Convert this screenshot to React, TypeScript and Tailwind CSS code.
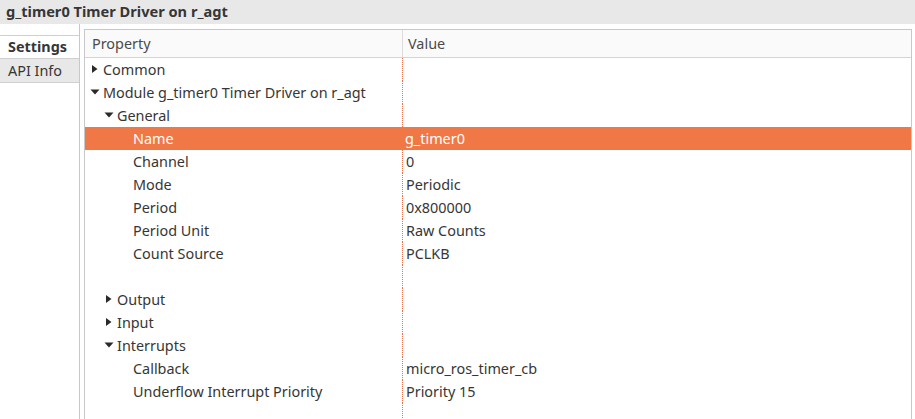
import React from 'react';

type Row = {
  label: string;
  value?: string;
  level: 0 | 1 | 2 | 3;
  arrow?: 'right' | 'down';
  selected?: boolean;
};

const rows: Row[] = [
  { label: 'Common', level: 1, arrow: 'right' },
  { label: 'Module g_timer0 Timer Driver on r_agt', level: 1, arrow: 'down' },
  { label: 'General', level: 2, arrow: 'down' },
  { label: 'Name', value: 'g_timer0', level: 3, selected: true },
  { label: 'Channel', value: '0', level: 3 },
  { label: 'Mode', value: 'Periodic', level: 3 },
  { label: 'Period', value: '0x800000', level: 3 },
  { label: 'Period Unit', value: 'Raw Counts', level: 3 },
  { label: 'Count Source', value: 'PCLKB', level: 3 },
  { label: '', level: 0 },
  { label: 'Output', level: 2, arrow: 'right' },
  { label: 'Input', level: 2, arrow: 'right' },
  { label: 'Interrupts', level: 2, arrow: 'down' },
  { label: 'Callback', value: 'micro_ros_timer_cb', level: 3 },
  { label: 'Underflow Interrupt Priority', value: 'Priority 15', level: 3 },
  { label: '', level: 0 },
];

const Arrow: React.FC<{ dir: 'right' | 'down'; light?: boolean }> = ({ dir, light }) => (
  <svg width="10" height="10" viewBox="0 0 10 10" className="shrink-0">
    {dir === 'right' ? (
      <path d="M2 1 L7.5 5 L2 9 Z" fill={light ? '#fff' : '#2a2a2a'} />
    ) : (
      <path d="M0.5 2.5 L9.5 2.5 L5 7.5 Z" fill={light ? '#fff' : '#2a2a2a'} />
    )}
  </svg>
);

const indentFor = (row: Row) => {
  if (row.level === 1) return 'pl-[5px]';
  if (row.level === 2) return 'pl-[19px]';
  return 'pl-[48px]';
};

const PropertyRow: React.FC<{ row: Row }> = ({ row }) => (
  <div className={`flex h-[23px] items-center ${row.selected ? 'bg-[#f07846] text-white' : 'text-[#363636]'}`}>
    <div className={`flex w-[317px] shrink-0 items-center gap-[3px] ${indentFor(row)}`}>
      {row.arrow && <Arrow dir={row.arrow} light={row.selected} />}
      <span className="whitespace-nowrap">{row.label}</span>
    </div>
    <div className={`flex h-full flex-1 items-center pl-[3px] ${row.selected ? '' : 'border-l border-dotted border-[#e8704a]'}`}>
      <span className="whitespace-nowrap">{row.value}</span>
    </div>
  </div>
);

export default function App() {
  return (
    <div
      className="flex h-[419px] w-[915px] flex-col overflow-hidden bg-white text-[14.4px]"
      style={{ fontFamily: '"Noto Sans", "Open Sans", sans-serif' }}
    >
      <header className="flex h-[24px] shrink-0 items-center bg-[#e8e8e8] pl-[6px]">
        <h1 className="text-[14.6px] font-bold text-[#363636]">g_timer0 Timer Driver on r_agt</h1>
      </header>

      <div className="flex min-h-0 flex-1">
        <nav className="flex w-[80px] shrink-0 flex-col border-r border-[#c8c8c8] bg-white pt-[11px]">
          <div className="flex h-[24px] items-center border-y border-[#d0d0d0] bg-white pl-[8px] font-bold text-[#363636]">
            Settings
          </div>
          <div className="flex h-[24px] items-center border-b border-[#d0d0d0] bg-[#e8e8e8] pl-[8px] text-[#363636]">
            API Info
          </div>
        </nav>

        <main className="ml-[4px] mr-[3px] mt-[5px] flex min-w-0 flex-1 flex-col border-x border-t border-[#c8c8c8]">
          <div className="flex h-[28px] shrink-0 items-center border-b border-[#d4d4d4] bg-[#fafafa] text-[#4a4a4a]">
            <div className="w-[317px] shrink-0 pl-[7px]">Property</div>
            <div className="flex h-full flex-1 items-center border-l border-[#dcdcdc] pl-[5px]">Value</div>
          </div>
          <div className="flex flex-col">
            {rows.map((row, i) => (
              <PropertyRow key={i} row={row} />
            ))}
          </div>
        </main>
      </div>
    </div>
  );
}
